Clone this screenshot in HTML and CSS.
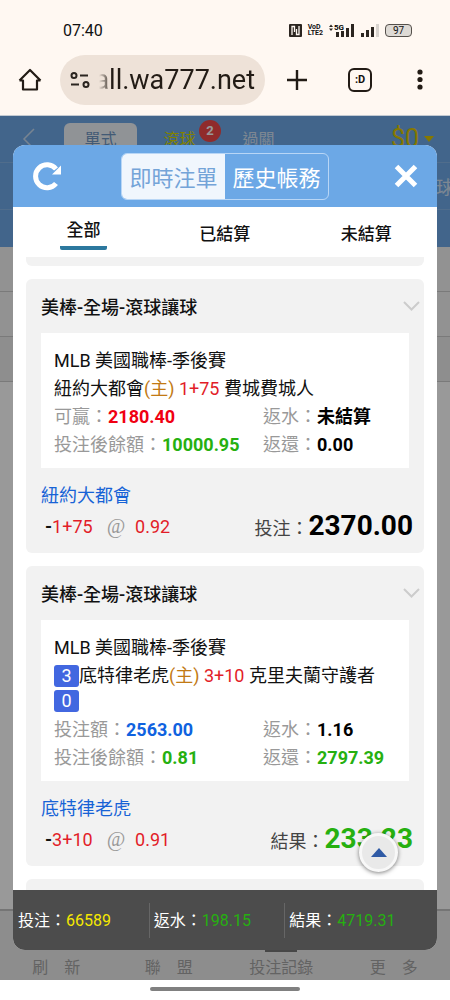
FILE: index.html
```
<!DOCTYPE html>
<html lang="zh-Hant">
<head>
  <meta charset="UTF-8">
  <meta name="viewport" content="width=device-width, initial-scale=1.0">
  <title>投注記錄</title>
  <link rel="stylesheet" href="styles.css">
</head>
<body>
  <!-- Status bar -->
  <div class="status-bar">
    <span class="clock">07:40</span>
    <div class="status-icons">
      <svg width="13" height="13" viewBox="0 0 13 13">
        <rect width="13" height="13" rx="1" fill="#2b2520"/>
        <path d="M3 11V2.500h2.500V8M10 2v8.500H7.500V5" fill="none" stroke="#fff8f2" stroke-width="1.300"/>
      </svg>
      <span class="volte"><span>VoD</span><span>LTE2</span></span>
      <svg class="signal" width="26" height="15" viewBox="0 0 26 15">
        <path d="M0 4l2-2.500L4 4zM0 5.500h4L2 8z" fill="#2b2520"/>
        <text x="5" y="7" font-size="8" font-weight="700">5G</text>
        <path d="M7 9h3v5H7zM12 8h3v6h-3zM17 5h3v9h-3zM22 1h3v13h-3z" fill="#2b2520"/>
      </svg>
      <svg width="18" height="13" viewBox="0 0 18 13">
        <path d="M0 9h3v4H0zM5 6h3v7H5zM10 3h3v10h-3z" fill="#2b2520"/>
        <path d="M15 0h3v13h-3z" fill="#d8d3ce"/>
      </svg>
      <span class="battery">97</span>
    </div>
  </div>

  <!-- Browser toolbar -->
  <div class="toolbar">
    <button class="tool-btn" aria-label="Home">
      <svg width="24" height="24" viewBox="0 0 24 24" fill="none" stroke="#221b15" stroke-width="2.200">
        <path d="M1.500 12.500L12 2l10.500 10.500M1.500 12.500H5v9h14v-9h3.500" stroke-linejoin="round"/>
      </svg>
    </button>
    <div class="address">
      <svg width="20" height="16" viewBox="0 0 20 16" fill="none" stroke="#2b2520" stroke-width="2">
        <circle cx="4" cy="3.500" r="2.500"/><path d="M10 3.500h8M1 12.500h8"/><circle cx="16" cy="12.500" r="2.500"/>
      </svg>
      <input type="text" class="url" aria-label="URL" value="all.wa777.net">
    </div>
    <button class="tool-btn" aria-label="New tab">
      <svg width="20" height="20" viewBox="0 0 20 20" stroke="#221b15" stroke-width="2.400"><path d="M10 0v20M0 10h20"/></svg>
    </button>
    <button class="tool-btn tab-count">:D</button>
    <button class="tool-btn" aria-label="Menu">
      <svg width="6" height="22" viewBox="0 0 6 22" fill="#221b15"><circle cx="3" cy="3" r="2.600"/><circle cx="3" cy="10.500" r="2.600"/><circle cx="3" cy="18" r="2.600"/></svg>
    </button>
  </div>

  <div class="app">
    <!-- Page under the popup -->
    <div class="page">
      <div class="page-top">
        <div class="nav-row">
          <svg class="back" width="14" height="24" viewBox="0 0 14 24" fill="none" stroke="#c9dcf2" stroke-width="1.500"><path d="M12 2L2 12l10 10"/></svg>
          <button class="mode active">單式</button>
          <button class="mode live">滾球<span class="badge">2</span></button>
          <button class="mode">過關</button>
          <span class="money">$0</span>
        </div>
        <div class="nav-row sports">球</div>
        <div class="nav-row last"></div>
      </div>
      <div class="page-row"></div>
      <div class="page-row"></div>
      <div class="page-row shade"></div>
      <div class="page-fill"></div>
      <div class="page-nav">
        <button>刷　新</button>
        <button>聯　盟</button>
        <button class="current">投注記錄</button>
        <button>更　多</button>
      </div>
    </div>

    <!-- Bet popup -->
    <div class="mask">
      <div class="popup">
        <div class="popup-head">
          <button class="icon-btn" aria-label="重新整理">
            <svg width="30" height="30" viewBox="0 0 30 30">
              <path d="M24 22.500A11.500 11.500 0 1 1 24 8" fill="none" stroke="#fff" stroke-width="5"/>
              <path d="M29 4.500v9h-9z" fill="#fff"/>
            </svg>
          </button>
          <div class="switch">
            <button class="on">即時注單</button>
            <button>歷史帳務</button>
          </div>
          <button class="icon-btn" aria-label="關閉">
            <svg width="24" height="24" viewBox="0 0 24 24" stroke="#fff" stroke-width="5"><path d="M2.500 2.500l19 19M21.500 2.500l-19 19"/></svg>
          </button>
        </div>

        <div class="tabs">
          <button class="active">全部</button>
          <button>已結算</button>
          <button>未結算</button>
        </div>

        <div class="bet-list">
          <div class="bet prev"></div>

          <div class="bet">
            <div class="bet-title">
              <h3>美棒-全場-滾球讓球</h3>
              <svg width="17" height="10" viewBox="0 0 17 10" fill="none" stroke="#ccc" stroke-width="2"><path d="M1 1l7.500 7.500L16 1"/></svg>
            </div>
            <div class="bet-info">
              <div>MLB 美國職棒-季後賽</div>
              <div>紐約大都會<span class="home">(主)</span> <span class="red">1+75</span> 費城費城人</div>
              <div class="amounts">
                <div>可贏：<b class="win">2180.40</b></div>
                <div>返水：<b>未結算</b></div>
                <div>投注後餘額：<b class="green">10000.95</b></div>
                <div>返還：<b>0.00</b></div>
              </div>
            </div>
            <div class="bet-foot">
              <div class="pick">紐約大都會</div>
              <div class="odds-row">
                <div class="odds"><b>-</b><span class="red">1+75</span><i>@</i><span class="red">0.92</span></div>
                <div class="total">投注：<b>2370.00</b></div>
              </div>
            </div>
          </div>

          <div class="bet">
            <div class="bet-title">
              <h3>美棒-全場-滾球讓球</h3>
              <svg width="17" height="10" viewBox="0 0 17 10" fill="none" stroke="#ccc" stroke-width="2"><path d="M1 1l7.500 7.500L16 1"/></svg>
            </div>
            <div class="bet-info">
              <div>MLB 美國職棒-季後賽</div>
              <div><span class="score">3</span>底特律老虎<span class="home">(主)</span> <span class="red">3+10</span> 克里夫蘭守護者</div>
              <div class="score-line"><span class="score">0</span></div>
              <div class="amounts">
                <div>投注額：<b class="blue">2563.00</b></div>
                <div>返水：<b>1.16</b></div>
                <div>投注後餘額：<b class="green">0.81</b></div>
                <div>返還：<b class="green">2797.39</b></div>
              </div>
            </div>
            <div class="bet-foot">
              <div class="pick">底特律老虎</div>
              <div class="odds-row">
                <div class="odds"><b>-</b><span class="red">3+10</span><i>@</i><span class="red">0.91</span></div>
                <div class="total">結果：<b class="green">233.23</b></div>
              </div>
            </div>
          </div>

          <div class="bet next"></div>
        </div>

        <div class="summary">
          <div>投注：<span class="yellow">66589</span></div>
          <div>返水：<span class="green">198.15</span></div>
          <div>結果：<span class="green">4719.31</span></div>
        </div>

        <button class="to-top" aria-label="回頂部">
          <svg width="16" height="9" viewBox="0 0 16 9"><path d="M8 0l8 9H0z" fill="#2f5aa5"/></svg>
        </button>
      </div>
    </div>
  </div>

  <div class="gesture"><span></span></div>
</body>
</html>
```

FILE: styles.css
```
* {
  box-sizing: border-box;
}
body {
  margin: 0;
  min-height: 100vh;
  display: flex;
  flex-direction: column;
  font-family: Roboto, "Noto Sans CJK TC", sans-serif;
  font-size: 18px;
  color: #111;
  background: #fff;
}
button {
  font: inherit;
  color: inherit;
  background: none;
  border: none;
  padding: 0;
  cursor: pointer;
}
svg {
  display: block;
}

/* status bar */
.status-bar {
  display: flex;
  justify-content: space-between;
  align-items: center;
  height: 50px;
  padding: 10px 38px 0 63px;
  background: #fff8f2;
}
.clock {
  font-size: 16px;
}
.status-icons {
  display: flex;
  align-items: center;
  gap: 6px;
}
.volte {
  display: flex;
  flex-direction: column;
  font-size: 7px;
  line-height: 6px;
  font-weight: 700;
}
.signal {
  font-family: Roboto, sans-serif;
}
.battery {
  width: 27px;
  height: 13px;
  border: 1px solid #55504b;
  border-radius: 4px;
  background: #dedad5;
  font-size: 10px;
  line-height: 11px;
  text-align: center;
}

/* browser toolbar */
.toolbar {
  display: flex;
  align-items: center;
  height: 66px;
  padding: 0 18px 6px;
  background: #fff8f2;
  border-bottom: 1px solid #c3cad2;
}
.tool-btn {
  flex: none;
  display: flex;
  justify-content: center;
  align-items: center;
  width: 24px;
  height: 24px;
}
.address {
  flex: 1;
  min-width: 0;
  display: flex;
  align-items: center;
  height: 50px;
  margin: 0 20px 0 18px;
  padding: 0 10px;
  border-radius: 25px;
  background: #eee2d8;
}
.address svg {
  flex: none;
}
.url {
  flex: 1;
  min-width: 0;
  padding: 0;
  border: none;
  outline: none;
  background: none;
  font: 27px Roboto, sans-serif;
  color: #221b15;
  text-align: right;
  -webkit-mask-image: linear-gradient(to right, transparent 9px, #000 22px);
  mask-image: linear-gradient(to right, transparent 9px, #000 22px);
}
.tab-count {
  margin: 0 36px 0 39px;
  border: 2px solid #221b15;
  border-radius: 6px;
  font-size: 11px;
  font-weight: 700;
}

/* page below */
.app {
  position: relative;
  flex: 1;
  display: flex;
}
.page {
  flex: 1;
  display: flex;
  flex-direction: column;
  overflow: hidden;
}
.page-top {
  background: #6ea9e8;
  color: #d3e2f4;
}
.nav-row {
  display: flex;
  height: 47px;
  padding: 7px 16px 0 22px;
  border-bottom: 1px solid #86b6ea;
}
.nav-row.sports {
  justify-content: flex-end;
  padding: 10px 0 0;
  margin-right: -4px;
}
.nav-row.last {
  height: 37px;
  border-bottom: none;
}
.back {
  margin: 4px 28px 0 0;
}
.mode {
  position: relative;
  height: 30px;
  width: 73px;
  margin-right: 6px;
  font-size: 16px;
}
.mode.active {
  background: #f1f5fa;
  color: #6f97c4;
  border-radius: 6px;
}
.mode.live {
  color: #d8d800;
}
.badge {
  position: absolute;
  top: -3px;
  right: -5px;
  width: 22px;
  height: 22px;
  border-radius: 50%;
  background: #f04848;
  color: #fff;
  font-size: 13px;
  line-height: 22px;
  font-weight: 700;
}
.money {
  margin-left: auto;
  font-size: 25px;
  line-height: 32px;
  color: #e0c800;
}
.money::after {
  content: "";
  display: inline-block;
  margin-left: 5px;
  border: 5px solid transparent;
  border-top: 6px solid #e0c800;
  border-bottom: none;
  vertical-align: 5px;
}
.page-row {
  height: 45px;
  background: #f4f4f4;
  border-bottom: 1px solid #ccc;
}
.page-row.shade {
  background: #ededed;
}
.page-fill {
  flex: 1;
}
.page-nav {
  display: flex;
  height: 71px;
  background: #ececec;
  border-top: 2px solid #c4c4c4;
  color: #a5a5a5;
  font-size: 16px;
}
.page-nav button {
  flex: 1;
  padding-top: 40px;
}
.page-nav .current {
  background: linear-gradient(#777, #777) center 38px / 32px 3px no-repeat;
}

/* popup */
.mask {
  position: absolute;
  inset: 0;
  display: flex;
  padding: 29px 13px 30px;
  background: rgba(0, 0, 0, 0.4);
}
.popup {
  position: relative;
  flex: 1;
  display: flex;
  flex-direction: column;
  border-radius: 12px;
  overflow: hidden;
  background: #fff;
}
.popup-head {
  display: flex;
  justify-content: space-between;
  align-items: center;
  height: 62px;
  padding: 0 19px;
  background: #6ca8e6;
}
.icon-btn {
  display: flex;
  justify-content: flex-end;
  width: 30px;
}
.switch {
  display: flex;
  height: 47px;
  border: 1px solid #b8d6f6;
  border-radius: 6px;
  overflow: hidden;
  color: #fff;
  font-size: 22px;
}
.switch button {
  width: 103px;
}
.switch .on {
  background: #f0f6fd;
  color: #74a4d8;
}
.tabs {
  display: flex;
  height: 50px;
  padding-bottom: 7px;
  font-size: 17px;
  font-weight: 500;
}
.tabs button {
  flex: 1;
  display: flex;
  justify-content: center;
  align-items: center;
  padding-top: 7px;
}
.tabs .active {
  flex: 0 0 47px;
  margin: 0 47px;
  padding-top: 4px;
  border-bottom: 4px solid #2c789e;
  border-radius: 2px;
}
.bet-list {
  flex: 1 1 0;
  overflow: hidden;
  padding: 0 13px;
}
.bet {
  margin-bottom: 13px;
  border-radius: 6px;
  background: #f2f2f2;
}
.bet.prev {
  height: 9px;
  border-radius: 0 0 6px 6px;
}
.bet.next {
  height: 60px;
}
.bet-title {
  display: flex;
  justify-content: space-between;
  align-items: center;
  height: 54px;
  padding: 0 4px 0 15px;
}
.bet-title h3 {
  margin: 0;
  font-size: 18px;
  font-weight: 500;
}
.bet-info {
  margin: 0 15px;
  padding: 14px 13px 9px;
  background: #fff;
  line-height: 28px;
}
.amounts {
  display: grid;
  grid-template-columns: 11fr 7fr;
  color: #999;
  white-space: nowrap;
}
.amounts b {
  color: #000;
}
.home {
  color: #c27a14;
}
.score {
  display: inline-block;
  width: 25px;
  height: 22px;
  border-radius: 3px;
  background: #4267e0;
  color: #fff;
  line-height: 22px;
  text-align: center;
}
.score-line {
  height: 26px;
  line-height: 22px;
}
.bet-foot {
  padding: 14px 11px 11px 15px;
}
.pick {
  line-height: 28px;
  color: #1763d6;
}
.odds-row {
  display: flex;
  justify-content: space-between;
  align-items: center;
  height: 32px;
}
.odds {
  padding-left: 4px;
}
.odds i {
  margin: 0 10px 0 14px;
  font-family: "Liberation Serif", serif;
  font-size: 20px;
  color: #999;
}
.total {
  color: #444;
}
.total b {
  font-size: 28px;
  line-height: 32px;
  color: #000;
}
.red {
  color: #e21d28;
}
.amounts .win {
  color: #f00012;
}
.amounts .blue {
  color: #0f62e0;
}
.green,
.amounts .green,
.total .green {
  color: #26b010;
}
.yellow {
  color: #f5e800;
}

/* totals */
.summary {
  display: flex;
  align-items: center;
  height: 60px;
  background: #4c4c4c;
  color: #fff;
  font-size: 16px;
}
.summary div {
  flex: 0 0 32%;
  padding-left: 4px;
  line-height: 35px;
  border-left: 1px solid #666;
}
.summary div:first-child {
  border-left-color: transparent;
}
.to-top {
  position: absolute;
  right: 39px;
  bottom: 78px;
  display: flex;
  justify-content: center;
  align-items: center;
  width: 39px;
  height: 39px;
  border: 3px solid #f8f8f8;
  border-radius: 50%;
  background: #e9e9e9;
  box-shadow: 0 1px 4px rgba(0, 0, 0, 0.5);
}

.gesture {
  display: flex;
  justify-content: center;
  height: 20px;
  padding-top: 7px;
}
.gesture span {
  width: 150px;
  height: 4px;
  border-radius: 2px;
  background: #808080;
}
```
